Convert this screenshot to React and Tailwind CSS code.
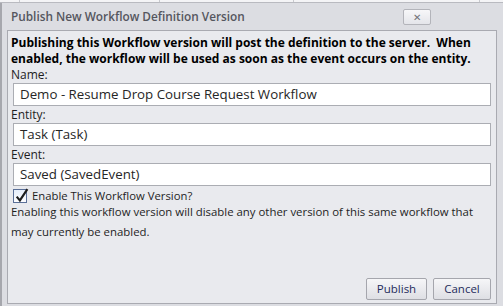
import React from 'react';

const font = { fontFamily: '"Open Sans", "Noto Sans", sans-serif' };

const Field = ({ label, value }) => (
  <div className="flex flex-col">
    <label className="text-[12px] leading-[15px] text-[#1e1e1e] h-[15px]">{label}</label>
    <div className="mt-[1px] mx-[2px] h-[23px] bg-white border border-[#abadb3] flex items-center px-[6px] text-[13.3px] text-[#262626]">
      {value}
    </div>
  </div>
);

const App = () => {
  return (
    <div className="w-[503px] h-[306px] bg-[#dcdde2] flex flex-col overflow-hidden" style={font}>
      {/* strip of the window behind */}
      <div className="h-[3px] bg-[#f4f4f6] flex border-b border-[#b9bac0]">
        <div className="w-[20px] border-r border-[#c8c9ce]" />
        <div className="w-[140px] border-r border-[#c8c9ce]" />
        <div className="w-[134px] border-r border-[#c8c9ce]" />
        <div className="w-[186px] border-r border-[#c8c9ce]" />
      </div>

      <div className="flex-1 flex flex-col border-l-2 border-[#a6a7ad]">
        {/* title bar */}
        <div className="h-[27px] flex items-center justify-between pl-[9px] pr-[72px]">
          <span className="text-[11.8px] font-semibold text-[#55565e] pt-[1px]">Publish New Workflow Definition Version</span>
          <button className="w-[28px] h-[16px] mt-[1px] bg-gradient-to-b from-[#f7f7f9] to-[#e4e5ea] border border-[#b3b4ba] rounded-[2px] flex items-center justify-center text-[#707177] text-[10px] leading-none">
            ✕
          </button>
        </div>

        {/* content */}
        <div className="flex-1 ml-[5px] mr-[6px] mb-[2px] bg-[#e9eaee] border border-[#a9aab1] flex flex-col px-[3px] pt-[4px]">
          <p className="text-[12px] font-bold leading-[16px] text-black">
            Publishing this Workflow version will post the definition to the server.&nbsp; When enabled, the workflow will be used as soon as the event occurs on the entity.
          </p>
          <div className="flex flex-col gap-[1px]">
            <Field label="Name:" value="Demo - Resume Drop Course Request Workflow" />
            <Field label="Entity:" value="Task (Task)" />
            <Field label="Event:" value="Saved (SavedEvent)" />
          </div>
          <div className="flex items-center mt-[2px] ml-[2px] h-[16px]">
            <div className="w-[14px] h-[14px] bg-gradient-to-b from-[#e6eefa] to-[#fdfdff] border border-[#5a6f97] relative">
              <svg viewBox="0 0 14 14" className="absolute -top-[3px] left-[0px] w-[15px] h-[16px]">
                <path d="M2.5 8.5 L5.5 12 L12.5 1.5" fill="none" stroke="#1c1c1c" strokeWidth="2" />
              </svg>
            </div>
            <span className="ml-[5px] text-[11.3px] text-[#1e1e1e]">Enable This Workflow Version?</span>
          </div>
          <p className="text-[11.4px] leading-[20px] text-[#1e1e1e] mt-[-2px]">
            Enabling this workflow version will disable any other version of this same workflow that may currently be enabled.
          </p>

          <div className="mt-auto mb-[3px] flex justify-end gap-[6px] pr-[2px]">
            <button className="w-[61px] h-[22px] bg-gradient-to-b from-[#f6f6f8] to-[#dedfe4] border border-[#a5a6ad] rounded-[2px] text-[11.5px] text-[#1f2c5c]">Publish</button>
            <button className="w-[58px] h-[22px] bg-gradient-to-b from-[#f6f6f8] to-[#dedfe4] border border-[#a5a6ad] rounded-[2px] text-[11.5px] text-[#1f2c5c]">Cancel</button>
          </div>
        </div>
      </div>
    </div>
  );
};

export default App;
